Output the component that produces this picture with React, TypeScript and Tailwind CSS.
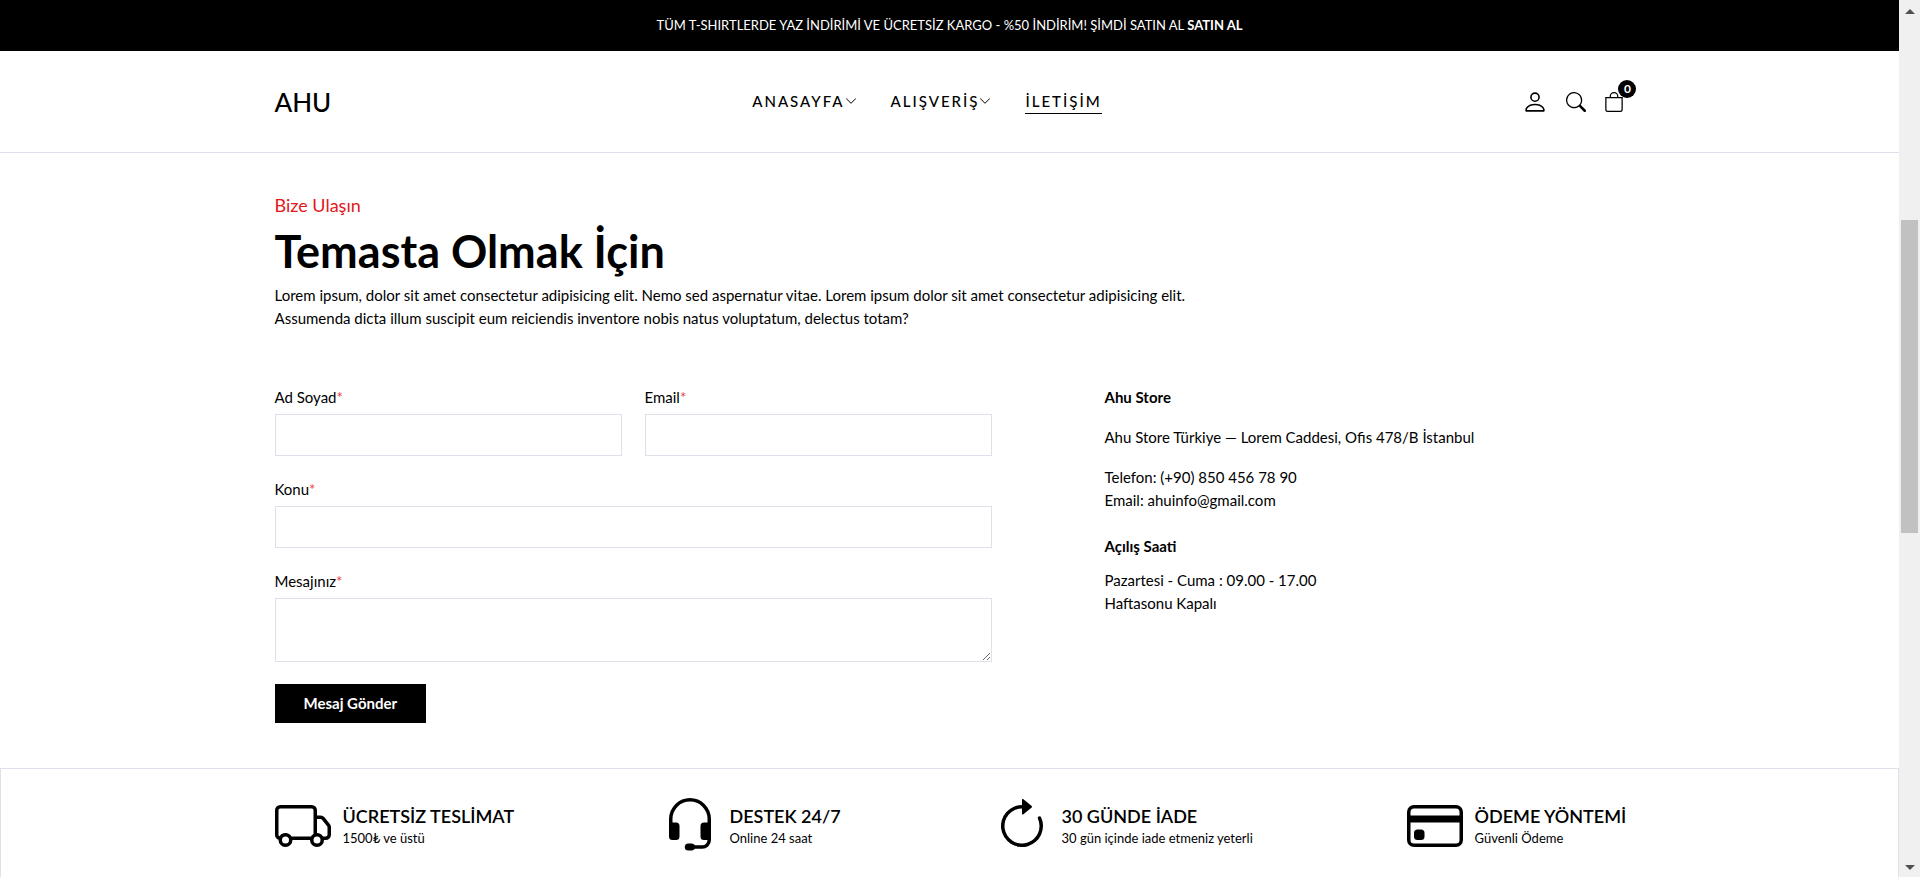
import type { ReactNode } from "react";
import {
  BsArrowClockwise,
  BsBag,
  BsChevronDown,
  BsCreditCard,
  BsHeadset,
  BsPerson,
  BsSearch,
  BsTruck,
} from "react-icons/bs";

const container = "mx-auto w-full max-w-[1380px] px-[15px]";
const control = "block w-full border border-[#dee0ea] bg-white px-3 outline-none focus:border-black";

function Field({ id, label, children }: { id: string; label: string; children: ReactNode }) {
  return (
    <div>
      <label htmlFor={id} className="mb-[5px] block text-[15px] leading-[23px]">
        {label}
        <span className="text-[#ee403d]">*</span>
      </label>
      {children}
    </div>
  );
}

const policies = [
  { icon: BsTruck, title: "ÜCRETSİZ TESLİMAT", text: "1500₺ ve üstü" },
  { icon: BsHeadset, title: "DESTEK 24/7", text: "Online 24 saat" },
  { icon: BsArrowClockwise, title: "30 GÜNDE İADE", text: "30 gün içinde iade etmeniz yeterli" },
  { icon: BsCreditCard, title: "ÖDEME YÖNTEMİ", text: "Güvenli Ödeme" },
];

function Header() {
  return (
    <header className="border-b border-[#dee0ea]">
      <div className={`${container} flex h-[101px] items-center justify-between`}>
        <a href="#" className="text-[26px] leading-8 font-medium">AHU</a>
        <nav className="flex items-center gap-[34px] text-[15px] leading-[23px] font-medium tracking-[2px]">
          <a href="#" className="flex items-center border-b border-transparent">
            ANASAYFA <BsChevronDown className="size-3" />
          </a>
          <a href="#" className="flex items-center border-b border-transparent">
            ALIŞVERİŞ <BsChevronDown className="size-3" />
          </a>
          <a href="#" className="border-b border-black">İLETİŞİM</a>
        </nav>
        <div className="flex items-center gap-[18px]">
          <a href="#" aria-label="Hesap"><BsPerson className="size-[26px]" /></a>
          <button type="button" aria-label="Ara"><BsSearch className="size-5" /></button>
          <a href="#" aria-label="Sepet" className="relative">
            <BsBag className="size-5" />
            <span className="absolute -top-3 -right-3 flex size-[18px] items-center justify-center rounded-full bg-black text-xs font-bold text-white">
              0
            </span>
          </a>
        </div>
      </div>
    </header>
  );
}

function Contact() {
  return (
    <main className={`${container} pt-[39px] pb-[45px]`}>
      <h4 className="text-lg leading-[27px] text-[#e4161b]">Bize Ulaşın</h4>
      <h2 className="mt-1 text-[45px] leading-[57px] font-bold">Temasta Olmak İçin</h2>
      <p className="mt-1 max-w-[950px] text-[15px] leading-[23px]">
        Lorem ipsum, dolor sit amet consectetur adipisicing elit. Nemo sed aspernatur vitae. Lorem ipsum dolor sit amet
        consectetur adipisicing elit. Assumenda dicta illum suscipit eum reiciendis inventore nobis natus voluptatum,
        delectus totam?
      </p>
      <div className="mt-[56px] grid grid-cols-[717fr_520fr] gap-[113px]">
        <form className="flex flex-col items-stretch" onSubmit={(e) => e.preventDefault()}>
          <div className="grid grid-cols-2 gap-x-[23px] gap-y-[22px]">
            <Field id="name" label="Ad Soyad">
              <input id="name" type="text" className={`${control} h-[42px]`} />
            </Field>
            <Field id="email" label="Email">
              <input id="email" type="email" className={`${control} h-[42px]`} />
            </Field>
            <div className="col-span-2">
              <Field id="subject" label="Konu">
                <input id="subject" type="text" className={`${control} h-[42px]`} />
              </Field>
            </div>
            <div className="col-span-2">
              <Field id="message" label="Mesajınız">
                <textarea id="message" className={`${control} h-16 resize py-2`} />
              </Field>
            </div>
          </div>
          <button
            type="submit"
            className="mt-[22px] h-[39px] self-start bg-black px-[29px] text-[15px] font-bold text-white"
          >
            Mesaj Gönder
          </button>
        </form>
        <address className="text-[15px] leading-[23px] not-italic">
          <strong className="block font-bold">Ahu Store</strong>
          <p className="mt-[17px]">Ahu Store Türkiye — Lorem Caddesi, Ofis 478/B İstanbul</p>
          <p className="mt-[17px]">Telefon: (+90) 850 456 78 90</p>
          <p>Email: ahuinfo@gmail.com</p>
          <strong className="mt-[23px] block font-bold">Açılış Saati</strong>
          <p className="mt-[11px]">Pazartesi - Cuma : 09.00 - 17.00</p>
          <p>Haftasonu Kapalı</p>
        </address>
      </div>
    </main>
  );
}

function Policies() {
  return (
    <section className="grow border border-b-0 border-[#dee0ea] pt-[29px]">
      <ul className={`${container} grid grid-cols-[387fr_332fr_413fr_218fr]`}>
        {policies.map(({ icon: Icon, title, text }) => (
          <li key={title} className="flex min-w-0 items-center gap-3">
            <Icon className="size-14 shrink-0" />
            <div className="whitespace-nowrap">
              <strong className="block text-lg leading-6 font-semibold">{title}</strong>
              <span className="block text-[13px] leading-5">{text}</span>
            </div>
          </li>
        ))}
      </ul>
    </section>
  );
}

function ScrollRail() {
  return (
    <div aria-hidden="true" className="flex w-[21px] shrink-0 flex-col items-center bg-[#f0f0f0]">
      <svg viewBox="0 0 10 5" className="mt-[9px] h-[5px] w-[10px] fill-[#505050]">
        <path d="M0 5L5 0L10 5Z" />
      </svg>
      <div className="mt-[206px] h-[313px] w-[17px] bg-[#c1c1c1]" />
      <svg viewBox="0 0 10 5" className="mt-auto mb-[7px] h-[5px] w-[10px] fill-[#505050]">
        <path d="M0 0L5 5L10 0Z" />
      </svg>
    </div>
  );
}

export default function App() {
  return (
    <div className="flex h-screen overflow-hidden bg-white font-['Lato','Noto_Sans',sans-serif] text-black">
      <div className="flex min-w-0 grow flex-col">
        <div className="bg-black py-[14px] text-center text-[13px] leading-[23px] text-white">
          TÜM T-SHIRTLERDE YAZ İNDİRİMİ VE ÜCRETSİZ KARGO - %50 İNDİRİM! ŞİMDİ SATIN AL{" "}
          <a href="#" className="font-bold">SATIN AL</a>
        </div>
        <Header />
        <Contact />
        <Policies />
      </div>
      <ScrollRail />
    </div>
  );
}
